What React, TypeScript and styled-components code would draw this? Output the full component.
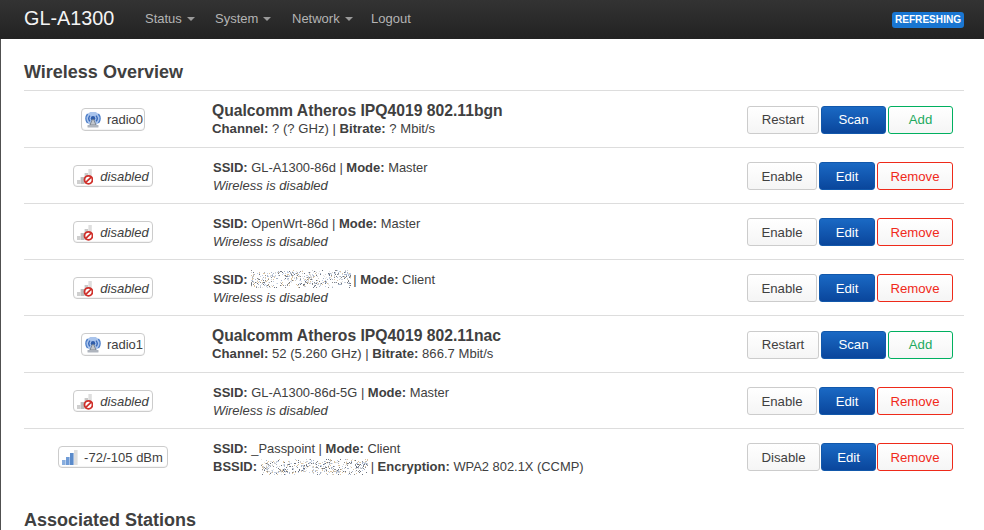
import React from "react";
import styled, { createGlobalStyle } from "styled-components";

const Global = createGlobalStyle`
  html, body { margin: 0; padding: 0; background: #fff; overflow: hidden; height: 530px; }
  body { font-family: "Liberation Sans", Arial, sans-serif; font-size: 13px; color: #404040; }
`;

const Page = styled.div`
  width: 984px;
  height: 530px;
  overflow: hidden;
`;

const Navbar = styled.header`
  height: 39px;
  display: flex;
  align-items: center;
  padding: 0 20px 3px 24px;
  background: linear-gradient(#333333, #222222);
  box-sizing: border-box;
`;

const Brand = styled.div`
  font-size: 19.8px;
  color: #f4f4f4;
  width: 121px;
`;

const NavList = styled.nav`
  display: flex;
  flex: 1;
`;

const NavItem = styled.span<{ $w: number }>`
  display: flex;
  align-items: center;
  width: ${(p) => p.$w}px;
  color: #b4b4b4;
  font-size: 13px;
`;

const Caret = styled.i`
  display: inline-block;
  width: 0;
  height: 0;
  margin-left: 5px;
  margin-top: 1px;
  border-left: 4px solid transparent;
  border-right: 4px solid transparent;
  border-top: 4px solid #9a9a9a;
`;

const RefreshBadge = styled.span`
  width: 72px;
  height: 16px;
  line-height: 16px;
  margin-top: 3px;
  background: #1976d2;
  border-radius: 3px;
  color: #fff;
  font-size: 10.1px;
  font-weight: bold;
  text-align: center;
`;

const Main = styled.main`
  height: 491px;
  padding: 0 20px 0 23px;
  border-left: 1px solid #505050;
`;

const Heading = styled.h2<{ $top: number; $h: number }>`
  margin: 0;
  padding-top: ${(p) => p.$top}px;
  height: ${(p) => p.$h}px;
  font-size: 18px;
  line-height: 22px;
  font-weight: bold;
  color: #404040;
  box-sizing: border-box;
`;

const Table = styled.section`
  border-top: 1px solid #dddddd;
  height: 394px;
`;

const Row = styled.div<{ $h: number; $last?: boolean }>`
  display: flex;
  align-items: center;
  height: ${(p) => p.$h}px;
  padding-top: 1px;
  box-sizing: border-box;
  border-bottom: ${(p) => (p.$last ? "none" : "1px solid #dddddd")};
`;

const StatusCell = styled.div`
  width: 178px;
  display: flex;
  justify-content: center;
  flex: none;
`;

const StatusBadge = styled.span<{ $off?: boolean; $h: number; $pr: number; $gap: number }>`
  display: inline-flex;
  align-items: center;
  gap: ${(p) => p.$gap}px;
  height: ${(p) => p.$h}px;
  padding: 0 ${(p) => p.$pr}px 0 3px;
  box-sizing: border-box;
  border: 1px solid #cccccc;
  border-radius: 4px;
  background: #fff;
  box-shadow: inset 0 -1px 1px rgba(0, 0, 0, 0.05);
  font-size: 13px;
  font-style: ${(p) => (p.$off ? "italic" : "normal")};
  color: #404040;
`;

const Info = styled.div<{ $top?: number }>`
  flex: 1;
  padding-left: 11px;
  padding-top: ${(p) => p.$top ?? 0}px;
  line-height: 18px;
  color: #404040;
  font-size: 12.9px;
  b {
    font-size: 13px;
  }
`;

const Title = styled.div`
  font-size: 15.7px;
  font-weight: bold;
  line-height: 19px;
  margin-left: -1px;
`;

const SubLine = styled.div`
  margin-left: -1px;
  font-size: 13.1px;
  b {
    font-size: 13.2px;
  }
`;

const Disabled = styled.em`
  display: block;
  font-size: 13px;
`;

const Actions = styled.div<{ $gap: number }>`
  display: flex;
  gap: ${(p) => p.$gap}px;
  padding-right: 11px;
  flex: none;
`;

const variants = {
  plain: "color:#404040;border-color:#cccccc;background:linear-gradient(#ffffff,#f5f5f5);",
  primary: "color:#ffffff;border-color:#1258ab;background:linear-gradient(#1a69c4,#0a469c);",
  add: "color:#1eaa5f;border-color:#00b060;background:linear-gradient(#ffffff,#f5f5f5);",
  remove: "color:#f02a1a;border-color:#ee2a1a;background:linear-gradient(#ffffff,#f5f5f5);",
};

const Btn = styled.button<{ $w: number; $kind: keyof typeof variants }>`
  width: ${(p) => p.$w}px;
  height: 28px;
  padding: 0;
  border: 1px solid;
  border-radius: 3px;
  font-family: inherit;
  font-size: 13.2px;
  ${(p) => variants[p.$kind]}
`;

const NoiseSvg = styled.svg<{ $mr: number }>`
  display: inline-block;
  vertical-align: -4px;
  margin-top: -4px;
  margin-right: ${(p) => p.$mr}px;
`;

const Noise = ({ w, h, seed, mr }: { w: number; h: number; seed: number; mr: number }) => {
  let s = seed;
  const next = () => {
    s = (s * 16807) % 2147483647;
    return s / 2147483647;
  };
  const colors = ["#cfcfcf", "#a8b4c8", "#dcc4a0", "#e4e4e4", "#8c8c8c", "#c0cee4", "#6e7480"];
  const dots: React.ReactElement[] = [];
  for (let y = 0; y < h; y++) {
    for (let x = 0; x < w; x++) {
      const band = 0.5 + 0.5 * Math.sin(x / 4.5 + seed) * Math.cos(y / 3.2 + x / 9);
      const edge = y < 2 || y > h - 3 ? 0.4 : 1;
      if (next() < (0.1 + 0.42 * band) * edge) {
        const c = colors[Math.floor(next() * colors.length)];
        dots.push(<rect key={x + "-" + y} x={x} y={y} width={1} height={1} fill={c} />);
      }
    }
  }
  return (
    <NoiseSvg $mr={mr} width={w} height={h} viewBox={`0 0 ${w} ${h}`}>
      {dots}
    </NoiseSvg>
  );
};

const RadioIcon = () => (
  <svg width="16" height="16" viewBox="0 0 16 16" fill="none">
    <circle cx="8" cy="6.5" r="7" fill="#a9c4ec" />
    <path d="M2.6 11a7 7 0 0 1 0-9M13.4 2a7 7 0 0 1 0 9" stroke="#4a7cc8" strokeWidth="1.5" />
    <path d="M5 9.4a4.4 4.4 0 0 1 0-5.8M11 3.6a4.4 4.4 0 0 1 0 5.8" stroke="#3a6aba" strokeWidth="1.4" />
    <circle cx="8" cy="6.2" r="2.2" fill="#2f5ca8" />
    <path d="M7.3 7.5L5 13h6L8.7 7.5z" fill="#c3c7cd" stroke="#6f7782" strokeWidth=".8" />
    <rect x="2.5" y="13" width="11" height="2.6" rx=".6" fill="#aeb4bd" />
  </svg>
);

const DisabledIcon = () => (
  <svg width="16" height="17" viewBox="0 0 16 17" fill="none">
    <rect x="0" y="12" width="3.4" height="4" fill="#cfcfcf" />
    <rect x="3.6" y="9" width="3.8" height="7" fill="#bdbdbd" />
    <rect x="7.6" y="5" width="3.6" height="11" fill="#c8c8c8" />
    <rect x="11.4" y="1" width="3.4" height="11" fill="#dedede" />
    <circle cx="11.5" cy="11.8" r="4" fill="#fff" stroke="#cf2f2a" strokeWidth="1.8" />
    <path d="M8.8 14.4l5.4-5.2" stroke="#cf2f2a" strokeWidth="1.7" />
  </svg>
);

const SignalIcon = () => (
  <svg width="16" height="17" viewBox="0 0 16 17">
    <rect x="0" y="11" width="3.6" height="5" fill="#89aede" />
    <rect x="4" y="8" width="3.6" height="8" fill="#6f9bd6" />
    <rect x="8" y="4" width="3.6" height="12" fill="#5a8aca" />
    <rect x="12" y="1" width="3.6" height="15" fill="#dedede" />
  </svg>
);

type Action = { label: string; w: number; kind: keyof typeof variants };

const radioActions: Action[] = [
  { label: "Restart", w: 72, kind: "plain" },
  { label: "Scan", w: 65, kind: "primary" },
  { label: "Add", w: 65, kind: "add" },
];
const enableActions: Action[] = [
  { label: "Enable", w: 70, kind: "plain" },
  { label: "Edit", w: 56, kind: "primary" },
  { label: "Remove", w: 76, kind: "remove" },
];
const disableActions: Action[] = [
  { label: "Disable", w: 73, kind: "plain" },
  { label: "Edit", w: 55, kind: "primary" },
  { label: "Remove", w: 76, kind: "remove" },
];

const Buttons = ({ items, gap = 2 }: { items: Action[]; gap?: number }) => (
  <Actions $gap={gap}>
    {items.map((a) => (
      <Btn key={a.label} $w={a.w} $kind={a.kind}>
        {a.label}
      </Btn>
    ))}
  </Actions>
);

const Off = () => (
  <StatusCell>
    <StatusBadge $off $h={22} $pr={3} $gap={7}>
      <DisabledIcon />
      disabled
    </StatusBadge>
  </StatusCell>
);

const Radio = ({ name }: { name: string }) => (
  <StatusCell>
    <StatusBadge $h={23} $pr={1} $gap={6}>
      <RadioIcon />
      {name}
    </StatusBadge>
  </StatusCell>
);

export default function App() {
  return (
    <Page>
      <Global />
      <Navbar>
        <Brand>GL-A1300</Brand>
        <NavList>
          <NavItem $w={70}>Status<Caret /></NavItem>
          <NavItem $w={77}>System<Caret /></NavItem>
          <NavItem $w={79}>Network<Caret /></NavItem>
          <NavItem $w={60}>Logout</NavItem>
        </NavList>
        <RefreshBadge>REFRESHING</RefreshBadge>
      </Navbar>
      <Main>
        <Heading $top={22} $h={51}>Wireless Overview</Heading>
        <Table>
          <Row $h={57}>
            <Radio name="radio0" />
            <Info>
              <Title>Qualcomm Atheros IPQ4019 802.11bgn</Title>
              <SubLine><b>Channel:</b> ? (? GHz) | <b>Bitrate:</b> ? Mbit/s</SubLine>
            </Info>
            <Buttons items={radioActions} />
          </Row>
          <Row $h={56}>
            <Off />
            <Info $top={2}>
              <b>SSID:</b> GL-A1300-86d | <b>Mode:</b> Master
              <Disabled>Wireless is disabled</Disabled>
            </Info>
            <Buttons items={enableActions} />
          </Row>
          <Row $h={56}>
            <Off />
            <Info $top={2}>
              <b>SSID:</b> OpenWrt-86d | <b>Mode:</b> Master
              <Disabled>Wireless is disabled</Disabled>
            </Info>
            <Buttons items={enableActions} />
          </Row>
          <Row $h={56}>
            <Off />
            <Info $top={2}>
              <b>SSID:</b> <Noise w={100} h={18} seed={4711} mr={2} />| <b>Mode:</b> Client
              <Disabled>Wireless is disabled</Disabled>
            </Info>
            <Buttons items={enableActions} />
          </Row>
          <Row $h={57}>
            <Radio name="radio1" />
            <Info>
              <Title>Qualcomm Atheros IPQ4019 802.11nac</Title>
              <SubLine><b>Channel:</b> 52 (5.260 GHz) | <b>Bitrate:</b> 866.7 Mbit/s</SubLine>
            </Info>
            <Buttons items={radioActions} />
          </Row>
          <Row $h={56}>
            <Off />
            <Info $top={2}>
              <b>SSID:</b> GL-A1300-86d-5G | <b>Mode:</b> Master
              <Disabled>Wireless is disabled</Disabled>
            </Info>
            <Buttons items={enableActions} />
          </Row>
          <Row $h={55} $last>
            <StatusCell>
              <StatusBadge $h={22} $pr={4} $gap={6}>
                <SignalIcon />
                -72/-105 dBm
              </StatusBadge>
            </StatusCell>
            <Info $top={2}>
              <b>SSID:</b> _Passpoint | <b>Mode:</b> Client
              <br />
              <b>BSSID:</b> <Noise w={107} h={16} seed={9127} mr={3} />| <b>Encryption:</b> WPA2 802.1X (CCMP)
            </Info>
            <Buttons items={disableActions} gap={1} />
          </Row>
        </Table>
        <Heading $top={24} $h={54}>Associated Stations</Heading>
      </Main>
    </Page>
  );
}
